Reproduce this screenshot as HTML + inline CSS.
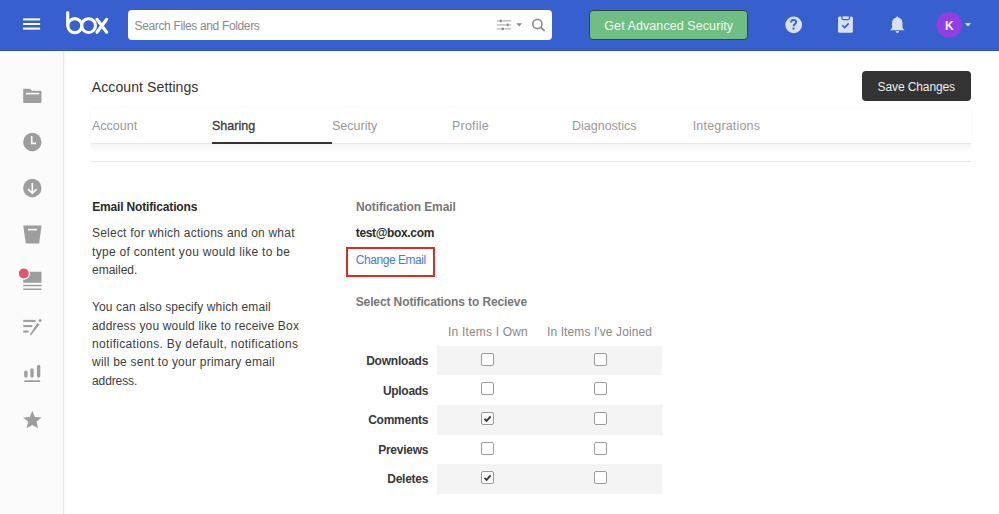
<!DOCTYPE html>
<html><head><meta charset="utf-8">
<style>
*{margin:0;padding:0;box-sizing:border-box}
html,body{width:999px;height:514px;overflow:hidden;background:#fff;font-family:"Liberation Sans",sans-serif;position:relative}
.a{position:absolute;white-space:nowrap}
#hdr{position:absolute;left:0;top:0;width:999px;height:51px;background:#385fce;border-bottom:1px solid #3153ba}
.hb{position:absolute;left:23px;width:17px;height:2px;background:#fff}
#search{position:absolute;left:128px;top:10px;width:424px;height:30px;background:#fff;border-radius:4px}
#gbtn{position:absolute;left:589px;top:10px;width:159px;height:30px;background:#6fbe83;border:1px solid #2c4a3a;border-radius:4px}
#side{position:absolute;left:0;top:51px;width:64px;height:463px;background:#fbfbfb;border-right:1px solid #e9e9e9;box-shadow:1px 0 1px rgba(0,0,0,0.025)}
.t{position:absolute;white-space:nowrap;line-height:20px;height:20px}
#save{position:absolute;left:862px;top:71px;width:109px;height:30px;background:#333;border-radius:4px}
#tabs{position:absolute;left:91px;top:108px;width:880px;height:36px;background:#fff;box-shadow:0 0 3px rgba(0,0,0,0.05);border-bottom:1px solid #e9e9e9}
#band{position:absolute;left:91px;top:144px;width:880px;height:9px;background:linear-gradient(#f5f5f5,#fbfbfb 60%,#fff)}
#hr{position:absolute;left:91px;top:161px;width:880px;height:1px;background:#e8e8e8}
.row{position:absolute;left:437px;width:225px;height:29.6px;background:#f4f4f4}
.cb{position:absolute;width:13px;height:13px;border:1px solid #9c9c9c;border-radius:2px;background:#fff}
</style></head><body>
<div id="hdr">
  <svg class="a" style="left:20px;top:15px" width="24" height="18" viewBox="20 15 24 18"><g fill="#fff"><rect x="23.1" y="18.4" width="17" height="2"/><rect x="23.1" y="23" width="17" height="2"/><rect x="23.1" y="27.6" width="17" height="2"/></g></svg>
  <svg class="a" style="left:60px;top:5px" width="55" height="40" viewBox="60 5 55 40">
    <g fill="none" stroke="#fff" stroke-width="3.1" stroke-linecap="round">
      <line x1="67.7" y1="12.5" x2="67.7" y2="25.6"/>
      <circle cx="74.8" cy="25.6" r="7"/>
      <circle cx="88.6" cy="25.6" r="6.9"/>
      <line x1="97" y1="19.3" x2="106.7" y2="32.3"/>
      <line x1="106.7" y1="19.3" x2="97" y2="32.3"/>
    </g>
  </svg>
  <div id="search">
    <div class="t" style="left:6.5px;top:5.6px;font-size:12px;letter-spacing:-0.35px;color:#8a8a8a">Search Files and Folders</div>
  </div>
  <svg class="a" style="left:490px;top:10px" width="62" height="30" viewBox="490 10 62 30">
    <g stroke="#b4b4b4" stroke-width="1.3">
      <path d="M496.8 20.9 L498.9 20.9 M502.5 20.9 L511.2 20.9"/>
      <path d="M496.8 24.9 L505.8 24.9 M509.4 24.9 L511.2 24.9"/>
      <path d="M496.8 28.9 L500.9 28.9 M504.5 28.9 L511.2 28.9"/>
    </g>
    <g fill="#8c8c8c">
      <circle cx="500.7" cy="20.9" r="1.4"/>
      <circle cx="507.6" cy="24.9" r="1.4"/>
      <circle cx="502.7" cy="28.9" r="1.4"/>
      <path d="M516.3 23.2 L522.1 23.2 L519.2 26.6 Z"/>
    </g>
    <g fill="none" stroke="#8e8e8e" stroke-width="1.7" stroke-linecap="round">
      <circle cx="537.4" cy="24" r="4.6"/>
      <line x1="540.9" y1="27.5" x2="544.2" y2="30.5"/>
    </g>
  </svg>
  <div id="gbtn">
    <div class="t" style="left:14.3px;top:5.4px;font-size:12.5px;letter-spacing:0.08px;color:#f4fbf5">Get Advanced Security</div>
  </div>
  <svg class="a" style="left:780px;top:5px" width="200" height="40" viewBox="780 5 200 40">
    <circle cx="793.7" cy="24.9" r="8.4" fill="#d7e0f5"/>
    <path d="M791.2 22.4 Q791.2 19.9 793.6 19.9 Q796.1 19.9 796.1 22.1 Q796.1 23.4 794.8 24.1 Q793.6 24.8 793.6 26.3" fill="none" stroke="#385fce" stroke-width="1.9"/>
    <circle cx="793.5" cy="28.6" r="1.1" fill="#385fce"/>
    <rect x="838" y="16.4" width="14.9" height="16.4" rx="1.6" fill="#d7e0f5"/>
    <path d="M841.9 16 L841.9 18 Q841.9 19.7 843.6 19.7 L847.8 19.7 Q849.5 19.7 849.5 18 L849.5 16" fill="none" stroke="#385fce" stroke-width="1.2"/>
    <rect x="843" y="16.7" width="5.4" height="1.8" rx="0.9" fill="#d7e0f5"/>
    <path d="M842.3 25.4 L844.7 27.6 L848.7 23.4" fill="none" stroke="#385fce" stroke-width="1.7"/>
    <path d="M897.3 16.5 Q898.3 16.5 898.4 17.6 Q902.5 18.8 902.5 23.5 L902.5 28 L904.6 30.3 L889.9 30.3 L892 28 L892 23.5 Q892 18.8 896.2 17.6 Q896.3 16.5 897.3 16.5 Z" fill="#d7e0f5"/>
    <path d="M895.5 31 L899.2 31 Q899 33.1 897.35 33.1 Q895.7 33.1 895.5 31 Z" fill="#d7e0f5"/>
    <circle cx="949.2" cy="24.8" r="12.9" fill="#8f3fe2"/>
    <text x="949.3" y="29.6" font-family="Liberation Sans" font-weight="bold" font-size="12" fill="#f6f0ff" text-anchor="middle">K</text>
    <path d="M965 23.2 L971 23.2 L968 26.5 Z" fill="#eef"/>
  </svg>
</div>

<div id="side">
  <svg class="a" style="left:0;top:0" width="64" height="463" viewBox="0 51 64 463">
    <g fill="#9e9e9e">
      <!-- folder -->
      <path d="M23.2 90 Q23.2 88.8 24.4 88.8 L30 88.8 L32 90.8 L40.3 90.8 Q41.5 90.8 41.5 92 L41.5 102 Q41.5 103.1 40.3 103.1 L24.4 103.1 Q23.2 103.1 23.2 102 Z"/>
      <!-- clock -->
      <circle cx="32.3" cy="142" r="9.2"/>
      <!-- download -->
      <circle cx="32.3" cy="188" r="9.2"/>
      <!-- trash -->
      <path d="M23.2 225.5 L41.5 225.5 L39.2 243.5 L25.8 243.5 Z"/>
      <!-- notif -->
      <path d="M29 271.8 L40.5 271.8 Q41.5 271.8 41.5 272.8 L41.5 282.7 L23.2 282.7 L23.2 279 Q28.5 279 29 271.8 Z"/>
      <rect x="23.2" y="284.8" width="18.3" height="1.5"/>
      <rect x="23.2" y="288.5" width="18.3" height="1.5"/>
      <!-- chart -->
      <rect x="24.2" y="370.6" width="3.4" height="7.2" rx="1.7"/>
      <rect x="30.3" y="368.3" width="3.4" height="9.5" rx="1.7"/>
      <rect x="36.9" y="364.8" width="3.4" height="13" rx="1.7"/>
      <rect x="24.2" y="380.3" width="16" height="1.8" rx="0.9"/>
      <!-- star -->
      <path d="M32.3 410.8 L34.9 416.9 L41.5 417.4 L36.5 421.8 L38 428.3 L32.3 424.9 L26.6 428.3 L28.1 421.8 L23.2 417.4 L29.7 416.9 Z"/>
    </g>
    <g stroke="#fbfbfb" fill="none" stroke-width="1.6">
      <line x1="25.9" y1="93.6" x2="39.2" y2="93.6"/>
      <path d="M31.7 135.9 L31.7 143.4 L36.1 143.4"/>
      <path d="M32.3 183 L32.3 193 M28 189.1 L32.3 193.3 L36.6 189.1"/>
      <line x1="28" y1="229.6" x2="37" y2="229.6"/>
    </g>
    <circle cx="23.8" cy="273.5" r="5.6" fill="#e0566f" stroke="#fbfbfb" stroke-width="1.2"/>
    <g stroke="#9e9e9e" stroke-width="2.1">
      <path d="M23.2 320.9 L35.6 320.9"/>
      <path d="M23.2 326.1 L32.2 326.1"/>
      <path d="M23.2 331.6 L28.6 331.6"/>
    </g>
    <path d="M37.2 323 L39.6 324.4 L31.2 335 L30 335.3 L30.2 334 Z" fill="#9e9e9e"/>
    <circle cx="40.1" cy="320.6" r="1.5" fill="#9e9e9e"/>
  </svg>
</div>

<div class="t" style="left:91.8px;top:77px;font-size:14px;letter-spacing:0.1px;color:#333">Account Settings</div>
<div id="save"><div class="t" style="left:15.5px;top:5.5px;font-size:12px;letter-spacing:-0.1px;color:#eee">Save Changes</div></div>

<div id="tabs"></div>
<div id="band"></div>
<div class="t" style="left:92px;top:116.2px;font-size:12.5px;color:#999">Account</div>
<div class="t" style="left:212px;top:116.2px;font-size:12.5px;color:#3a3a3a;-webkit-text-stroke:0.3px #3a3a3a">Sharing</div>
<div class="t" style="left:332px;top:116.2px;font-size:12.5px;color:#999">Security</div>
<div class="t" style="left:452px;top:116.2px;font-size:12.5px;letter-spacing:0.2px;color:#999">Profile</div>
<div class="t" style="left:572px;top:116.2px;font-size:12.5px;color:#999">Diagnostics</div>
<div class="t" style="left:692.7px;top:116.2px;font-size:12.5px;letter-spacing:0.18px;color:#999">Integrations</div>
<div class="a" style="left:212px;top:141.5px;width:120px;height:2.6px;background:#333"></div>
<div id="hr"></div>

<div class="t" style="left:92.2px;top:196.5px;font-size:12px;font-weight:bold;letter-spacing:-0.16px;color:#2a2a2a">Email Notifications</div>
<div class="t" style="left:92px;top:223.1px;font-size:12px;letter-spacing:0.22px;color:#404040">Select for which actions and on what</div>
<div class="t" style="left:92px;top:241.5px;font-size:12px;letter-spacing:0.3px;color:#404040">type of content you would like to be</div>
<div class="t" style="left:92px;top:259.8px;font-size:12px;letter-spacing:0px;color:#404040">emailed.</div>
<div class="t" style="left:92px;top:297.4px;font-size:12px;letter-spacing:0.12px;color:#404040">You can also specify which email</div>
<div class="t" style="left:92px;top:315.7px;font-size:12px;letter-spacing:0.17px;color:#404040">address you would like to receive Box</div>
<div class="t" style="left:92px;top:334.1px;font-size:12px;letter-spacing:0.32px;color:#404040">notifications. By default, notifications</div>
<div class="t" style="left:92px;top:352.4px;font-size:12px;letter-spacing:0.24px;color:#404040">will be sent to your primary email</div>
<div class="t" style="left:92px;top:370.8px;font-size:12px;letter-spacing:-0.1px;color:#404040">address.</div>

<div class="t" style="left:355.9px;top:196.7px;font-size:12px;font-weight:bold;letter-spacing:-0.08px;color:#777">Notification Email</div>
<div class="t" style="left:355.8px;top:222.7px;font-size:12px;font-weight:bold;letter-spacing:-0.35px;color:#2b2b2b">test@box.com</div>
<div class="a" style="left:345.5px;top:247.2px;width:89.3px;height:30px;border:2.4px solid #dc2e1e"></div>
<div class="t" style="left:355.8px;top:250.1px;font-size:12px;letter-spacing:-0.45px;color:#4a7ad9">Change Email</div>
<div class="t" style="left:355.7px;top:291.7px;font-size:12px;font-weight:bold;letter-spacing:-0.11px;color:#777">Select Notifications to Recieve</div>
<div class="t" style="left:448px;top:322.4px;font-size:12px;letter-spacing:0.18px;color:#888">In Items I Own</div>
<div class="t" style="left:547px;top:322.4px;font-size:12px;letter-spacing:0.1px;color:#888">In Items I've Joined</div>

<div class="row" style="top:345.8px"></div>
<div class="row" style="top:405px"></div>
<div class="row" style="top:464.2px"></div>

<div class="t" style="left:300px;width:128.2px;text-align:right;top:351px;font-size:12px;font-weight:bold;letter-spacing:-0.22px;color:#383838">Downloads</div>
<div class="t" style="left:300px;width:128.2px;text-align:right;top:380.6px;font-size:12px;font-weight:bold;letter-spacing:-0.3px;color:#383838">Uploads</div>
<div class="t" style="left:300px;width:128.2px;text-align:right;top:410.2px;font-size:12px;font-weight:bold;letter-spacing:-0.25px;color:#383838">Comments</div>
<div class="t" style="left:300px;width:128.2px;text-align:right;top:439.8px;font-size:12px;font-weight:bold;letter-spacing:-0.25px;color:#383838">Previews</div>
<div class="t" style="left:300px;width:128.2px;text-align:right;top:469.4px;font-size:12px;font-weight:bold;letter-spacing:-0.25px;color:#383838">Deletes</div>

<div class="cb" style="left:481px;top:352.7px"></div><div class="cb" style="left:594px;top:352.7px"></div>
<div class="cb" style="left:481px;top:382.2px"></div><div class="cb" style="left:594px;top:382.2px"></div>
<div class="cb" style="left:481px;top:411.9px"></div><div class="cb" style="left:594px;top:411.9px"></div>
<div class="cb" style="left:481px;top:441.5px"></div><div class="cb" style="left:594px;top:441.5px"></div>
<div class="cb" style="left:481px;top:471.1px"></div><div class="cb" style="left:594px;top:471.1px"></div>
<svg class="a" style="left:481px;top:411.9px" width="13" height="13"><path d="M3.5 6.8 L5.6 8.9 L9.6 4.3" fill="none" stroke="#333" stroke-width="1.8"/></svg>
<svg class="a" style="left:481px;top:471.1px" width="13" height="13"><path d="M3.5 6.8 L5.6 8.9 L9.6 4.3" fill="none" stroke="#333" stroke-width="1.8"/></svg>
</body></html>
